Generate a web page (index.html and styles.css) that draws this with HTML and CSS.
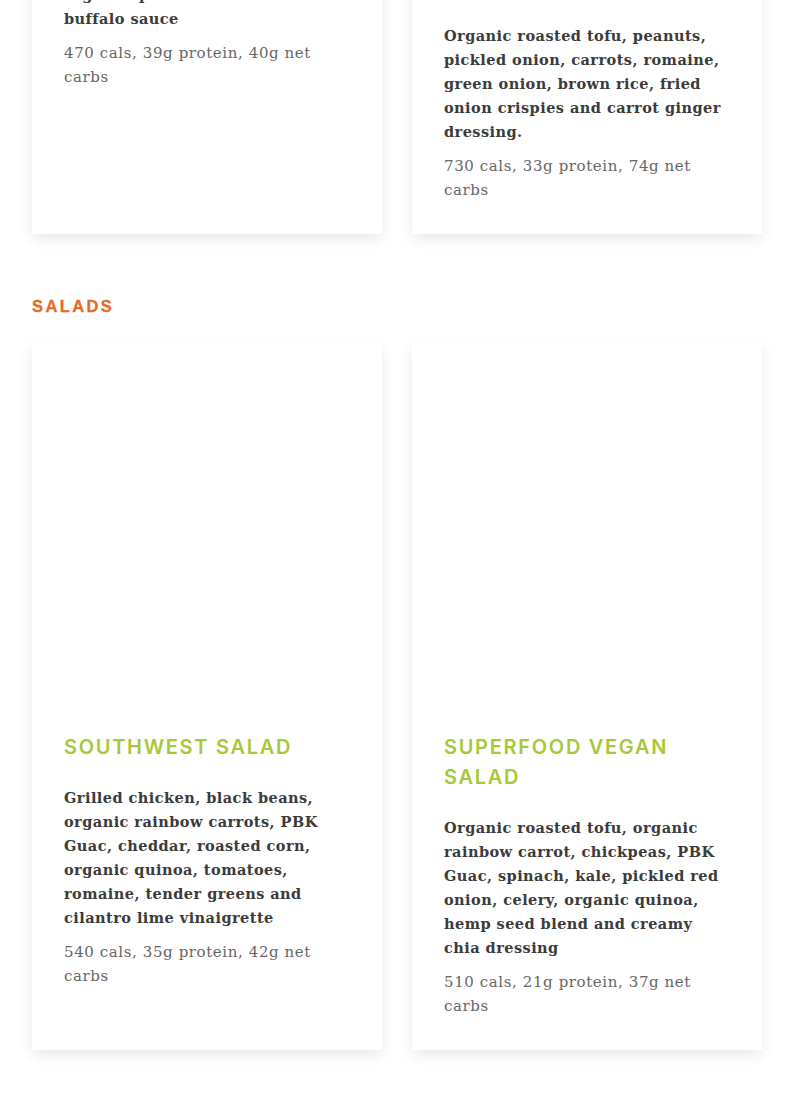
FILE: index.html
```html
<!DOCTYPE html>
<html lang="en">
<head>
<meta charset="utf-8">
<title>Menu</title>
<link rel="stylesheet" href="styles.css">
</head>
<body>
<main class="page">
  <section class="menu-section">
    <div class="card-grid">
      <article class="card">
        <div class="card-media card-media--short"></div>
        <div class="card-body">
          <h3 class="card-title">Buffalo Chicken Bowl</h3>
          <p class="card-desc">Grilled chicken, celery, carrots, organic quinoa and traditional buffalo sauce</p>
          <p class="card-nutrition">470 cals, 39g protein, 40g net carbs</p>
        </div>
      </article>
      <article class="card">
        <div class="card-media"></div>
        <div class="card-body">
          <h3 class="card-title">Thai Peanut Tofu Bowl</h3>
          <p class="card-desc">Organic roasted tofu, peanuts, pickled onion, carrots, romaine, green onion, brown rice, fried onion crispies and carrot ginger dressing.</p>
          <p class="card-nutrition">730 cals, 33g protein, 74g net carbs</p>
        </div>
      </article>
    </div>
  </section>

  <section class="menu-section">
    <h2 class="section-title">Salads</h2>
    <div class="card-grid">
      <article class="card">
        <div class="card-media"></div>
        <div class="card-body">
          <h3 class="card-title">Southwest Salad</h3>
          <p class="card-desc">Grilled chicken, black beans, organic rainbow carrots, PBK Guac, cheddar, roasted corn, organic quinoa, tomatoes, romaine, tender greens and cilantro lime vinaigrette</p>
          <p class="card-nutrition">540 cals, 35g protein, 42g net carbs</p>
        </div>
      </article>
      <article class="card">
        <div class="card-media"></div>
        <div class="card-body">
          <h3 class="card-title">Superfood Vegan Salad</h3>
          <p class="card-desc">Organic roasted tofu, organic rainbow carrot, chickpeas, PBK Guac, spinach, kale, pickled red onion, celery, organic quinoa, hemp seed blend and creamy chia dressing</p>
          <p class="card-nutrition">510 cals, 21g protein, 37g net carbs</p>
        </div>
      </article>
    </div>
  </section>
</main>
</body>
</html>
```
FILE: styles.css
```css
* { box-sizing: border-box; }

html, body {
  margin: 0;
  padding: 0;
  background: #ffffff;
}

body {
  font-family: "DejaVu Serif", "Liberation Serif", serif;
  color: #3a3a3a;
}

.page {
  margin-top: -449px;
  padding: 0 32px 80px;
}

.section-title {
  margin: 63px 0 27px;
  font-family: "Liberation Sans", Arial, sans-serif;
  font-weight: 700;
  font-size: 16.5px;
  line-height: 19px;
  letter-spacing: 2.4px;
  text-transform: uppercase;
  color: #e36b2a;
  -webkit-text-stroke: 0.3px #e36b2a;
}

.card-grid {
  display: grid;
  grid-template-columns: 350px 350px;
  column-gap: 30px;
}

.card {
  background: #ffffff;
  box-shadow: 0 5px 14px rgba(0, 0, 0, 0.09);
  display: flex;
  flex-direction: column;
}

.card-media {
  height: 357px;
  background: #ffffff;
}

.card-media--short {
  height: 322px;
}

.card-body {
  padding: 32px;
}

.card-title {
  margin: 0 0 24px;
  font-family: "Inter", "Open Sans", sans-serif;
  font-weight: 600;
  font-size: 20px;
  line-height: 30px;
  letter-spacing: 1.7px;
  text-transform: uppercase;
  color: #a8c83a;
}

.card-desc {
  margin: 0 0 10px;
  font-weight: 700;
  font-size: 14.5px;
  line-height: 24px;
  letter-spacing: 0.45px;
  color: #3b3b3b;
}

.card-nutrition {
  margin: 0;
  font-size: 15px;
  line-height: 24px;
  letter-spacing: 0.6px;
  color: #666666;
}
```
